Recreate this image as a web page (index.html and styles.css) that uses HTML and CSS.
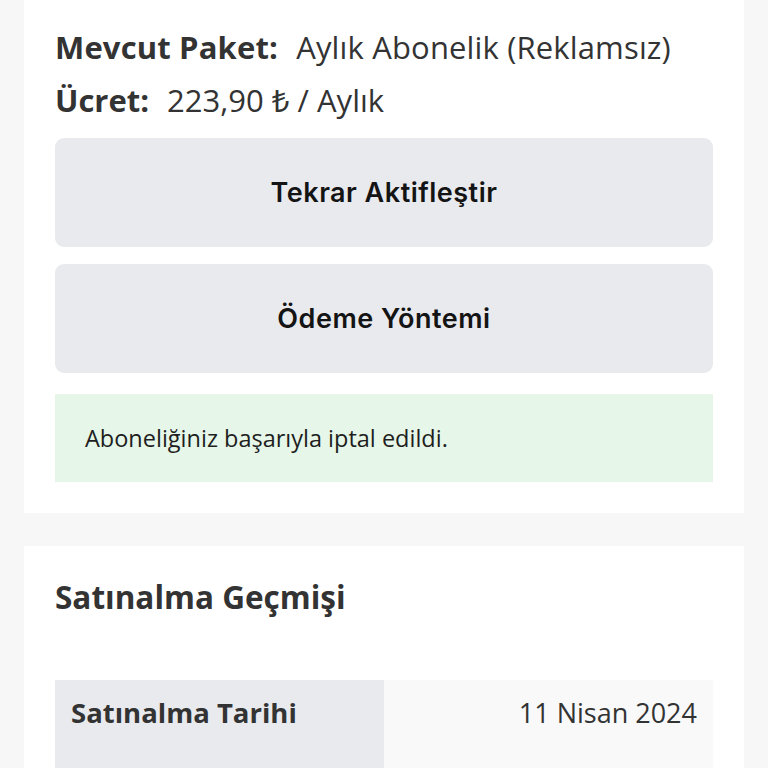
FILE: index.html
```html
<!DOCTYPE html>
<html lang="tr">
<head>
<meta charset="utf-8">
<link rel="stylesheet" href="styles.css">
</head>
<body>
<div class="page">
  <section class="card card-top">
    <p class="info"><span class="label">Mevcut Paket:</span> Aylık Abonelik (Reklamsız)</p>
    <p class="info"><span class="label">Ücret:</span> 223,90 ₺ / Aylık</p>
    <button class="btn first">Tekrar Aktifleştir</button>
    <button class="btn second">Ödeme Yöntemi</button>
    <div class="alert">Aboneliğiniz başarıyla iptal edildi.</div>
  </section>
  <section class="card card-history">
    <h2 class="title">Satınalma Geçmişi</h2>
    <div class="row">
      <div class="cell-label">Satınalma Tarihi</div>
      <div class="cell-value">11 Nisan 2024</div>
    </div>
  </section>
</div>
</body>
</html>
```
FILE: styles.css
```css
html, body {
  margin: 0;
  padding: 0;
  background: #f7f7f7;
  height: 100%;
  overflow: hidden;
}
body {
  font-family: "Open Sans", "Noto Sans", sans-serif;
  color: #333333;
}
.page {
  display: flex;
  flex-direction: column;
  gap: 33px;
  padding: 0 24px;
}
.card {
  background: #ffffff;
  padding: 0 31px;
  display: flex;
  flex-direction: column;
}
.card-top {
  padding-top: 27px;
  padding-bottom: 31px;
}
.info {
  margin: 0;
  font-size: 31px;
  line-height: 40px;
  white-space: pre;
}
.info + .info { margin-top: 13px; }
.info .label {
  font-weight: 700;
  margin-right: 10px;
}
.info:first-child { letter-spacing: 0.15px; }
.btn {
  display: flex;
  align-items: center;
  justify-content: center;
  flex: 0 0 109px;
  height: 109px;
  border: none;
  border-radius: 9px;
  background: #e9eaee;
  color: #141414;
  font-family: Inter, "Liberation Sans", sans-serif;
  font-weight: 600;
  font-size: 27px;
  letter-spacing: 0.5px;
  padding: 0;
}
.btn.first { margin-top: 18px; }
.btn.second { margin-top: 17px; }
.alert {
  margin-top: 21px;
  flex: 0 0 88px;
  height: 88px;
  box-sizing: border-box;
  display: flex;
  align-items: center;
  padding: 0 30px;
  background: #e6f6e8;
  color: #1e1e1e;
  font-size: 23.5px;
}
.card-history {
  padding-top: 29px;
  height: 300px;
}
.title {
  margin: 0;
  font-size: 31.5px;
  line-height: 44px;
  font-weight: 700;
}
.row {
  margin-top: 61px;
  display: grid;
  grid-template-columns: 1fr 1fr;
  height: 120px;
}
.cell-label {
  background: #e9eaee;
  padding: 14px 16px;
  font-weight: 700;
  font-size: 27.5px;
}
.cell-value {
  background: #f9f9fa;
  padding: 14px 16px;
  text-align: right;
  font-size: 27px;
}
```
